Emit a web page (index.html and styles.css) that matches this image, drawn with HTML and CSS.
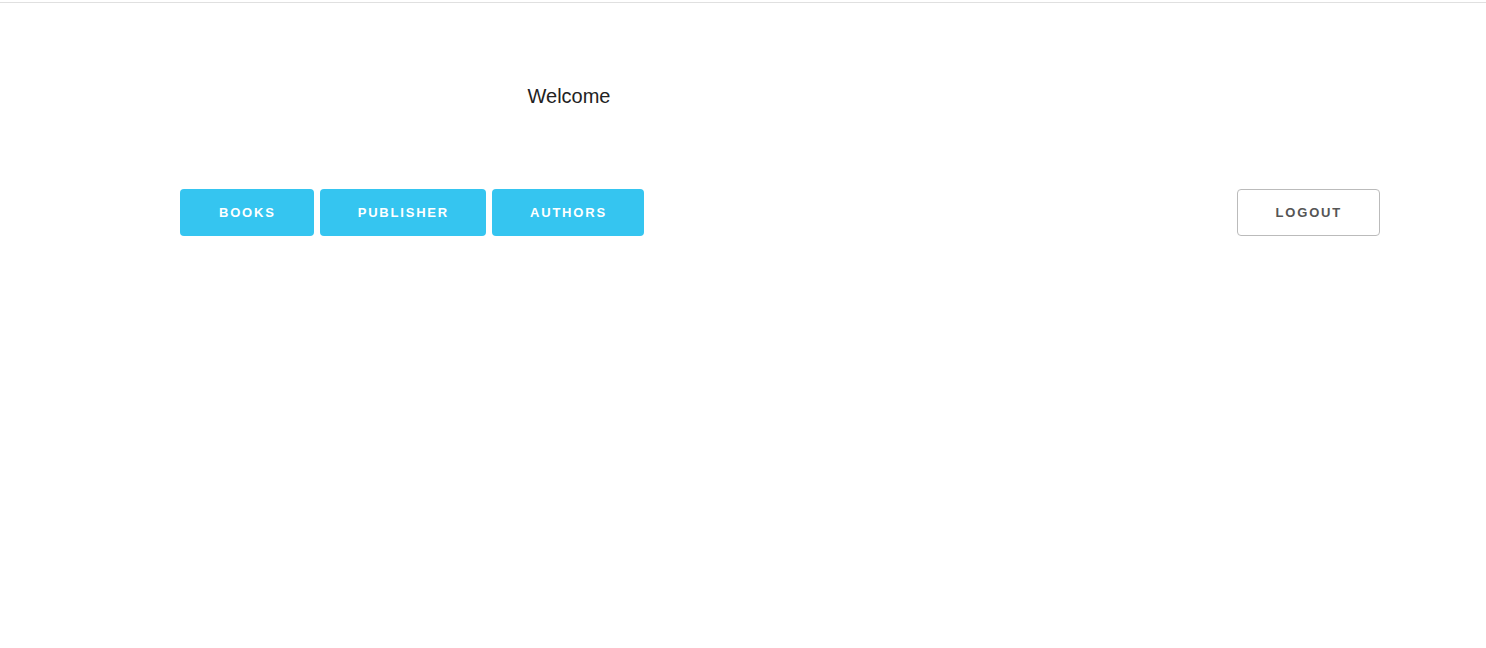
FILE: index.html
```html
<!DOCTYPE html>
<html lang="en">
<head>
    <meta charset="UTF-8">
    <meta name="viewport" content="width=device-width, initial-scale=1.0">
    <title>Library</title>
    <link rel="stylesheet" href="styles.css">
</head>
<body>
    <div class="topbar"></div>
    <div class="container">
        <div class="welcome-row">
            <h2 class="welcome">Welcome</h2>
        </div>
        <div class="nav-row">
            <div class="nav-buttons">
                <a href="#" class="btn btn-primary btn-books">Books</a>
                <a href="#" class="btn btn-primary">Publisher</a>
                <a href="#" class="btn btn-primary">Authors</a>
            </div>
            <a href="#" class="btn btn-outline">Logout</a>
        </div>
    </div>
</body>
</html>
```

FILE: styles.css
```css
body {
    font-family: 'Liberation Sans', Arial, sans-serif;
    margin: 0;
    padding: 0;
    background: #ffffff;
    color: #222;
}
.topbar {
    height: 2px;
    border-bottom: 1px solid #e0e0e0;
}
.container {
    width: 1200px;
    margin-left: 180px;
}
.welcome-row {
    width: 778px;
    text-align: center;
    padding-top: 78px;
}
.welcome {
    margin: 0;
    font-size: 20px;
    font-weight: normal;
    line-height: 30px;
    color: #222;
}
.nav-row {
    display: flex;
    justify-content: space-between;
    align-items: center;
    margin-top: 78px;
}
.nav-buttons {
    display: flex;
    gap: 6px;
}
.btn {
    display: inline-block;
    height: 47px;
    line-height: 47px;
    padding: 0 37px 0 38px;
    font-size: 13px;
    font-weight: bold;
    letter-spacing: 1.8px;
    text-transform: uppercase;
    text-decoration: none;
    border-radius: 4px;
    box-sizing: border-box;
}
.btn-books {
    padding: 0 38px 0 39px;
}
.btn-primary {
    background-color: #35c5f0;
    color: #fff;
}
.btn-outline {
    border: 1px solid #bbb;
    color: #555;
    line-height: 45px;
    padding: 0 37px 0 38px;
}
```
